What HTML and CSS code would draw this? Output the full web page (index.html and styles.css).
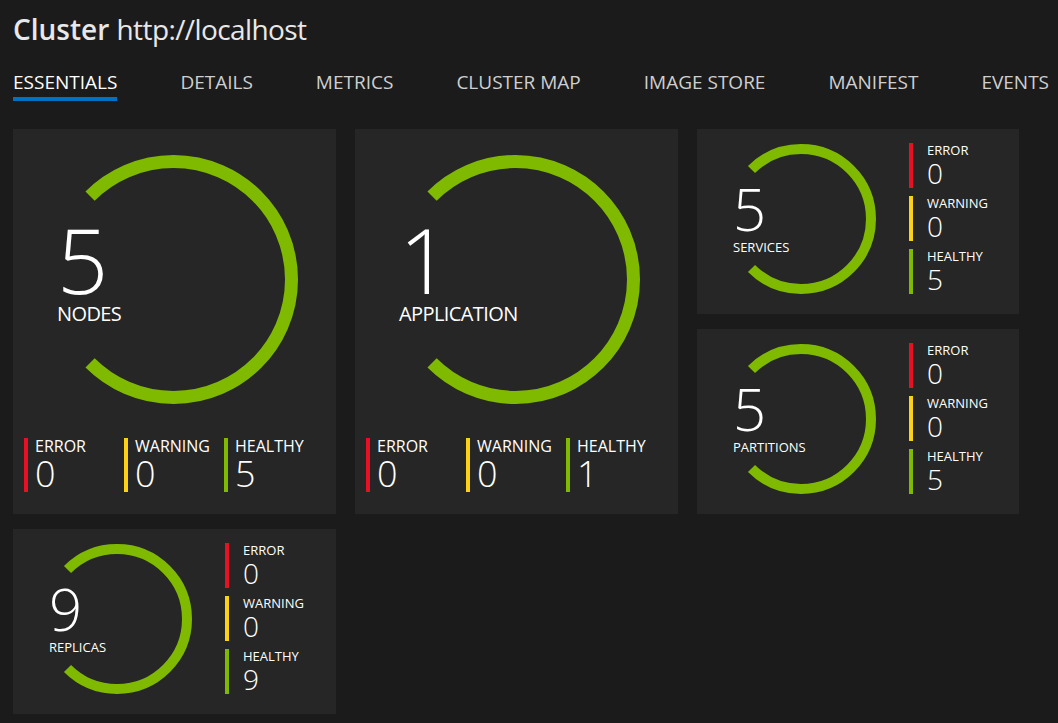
FILE: index.html
```html
<!DOCTYPE html>
<html lang="en">
<head>
<meta charset="utf-8">
<title>Cluster http://localhost</title>
<link rel="stylesheet" href="styles.css">
</head>
<body>
<header class="page-head">
  <h1 class="title"><b>Cluster</b> <span class="url">http://localhost</span></h1>
  <nav class="tabs">
    <span class="tab active">ESSENTIALS</span>
    <span class="tab">DETAILS</span>
    <span class="tab">METRICS</span>
    <span class="tab">CLUSTER MAP</span>
    <span class="tab">IMAGE STORE</span>
    <span class="tab">MANIFEST</span>
    <span class="tab">EVENTS</span>
  </nav>
</header>
<main class="grid">
  <section class="card card-big">
    <div class="gauge gauge-big">
      <svg class="ring" width="249" height="249" viewBox="0 0 249 249"><path d="M41.06 41.06 A118 118 0 1 1 41.06 207.94" fill="none" stroke="#7fba00" stroke-width="13"/></svg>
      <div class="gauge-text gauge-text-big"><div class="big-num">5</div><div class="big-label">NODES</div></div>
    </div>
    <div class="stats-row">
      <div class="stat stat-error"><div class="stat-label">ERROR</div><div class="stat-val">0</div></div>
      <div class="stat stat-warning"><div class="stat-label">WARNING</div><div class="stat-val">0</div></div>
      <div class="stat stat-healthy"><div class="stat-label">HEALTHY</div><div class="stat-val">5</div></div>
    </div>
  </section>
  <section class="card card-big">
    <div class="gauge gauge-big">
      <svg class="ring" width="249" height="249" viewBox="0 0 249 249"><path d="M41.06 41.06 A118 118 0 1 1 41.06 207.94" fill="none" stroke="#7fba00" stroke-width="13"/></svg>
      <div class="gauge-text gauge-text-big"><div class="big-num">1</div><div class="big-label">APPLICATION</div></div>
    </div>
    <div class="stats-row">
      <div class="stat stat-error"><div class="stat-label">ERROR</div><div class="stat-val">0</div></div>
      <div class="stat stat-warning"><div class="stat-label">WARNING</div><div class="stat-val">0</div></div>
      <div class="stat stat-healthy"><div class="stat-label">HEALTHY</div><div class="stat-val">1</div></div>
    </div>
  </section>
  <section class="card card-small">
    <div class="gauge gauge-small">
      <svg class="ring" width="150" height="150" viewBox="0 0 150 150"><path d="M25.5 25.5 A70 70 0 1 1 25.5 124.5" fill="none" stroke="#7fba00" stroke-width="10"/></svg>
      <div class="gauge-text gauge-text-small"><div class="mid-num">5</div><div class="mid-label">SERVICES</div></div>
    </div>
    <div class="stats-col">
      <div class="stat-s stat-error"><div class="s-label">ERROR</div><div class="s-val">0</div></div>
      <div class="stat-s stat-warning"><div class="s-label">WARNING</div><div class="s-val">0</div></div>
      <div class="stat-s stat-healthy"><div class="s-label">HEALTHY</div><div class="s-val">5</div></div>
    </div>
  </section>
  <section class="card card-small">
    <div class="gauge gauge-small">
      <svg class="ring" width="150" height="150" viewBox="0 0 150 150"><path d="M25.5 25.5 A70 70 0 1 1 25.5 124.5" fill="none" stroke="#7fba00" stroke-width="10"/></svg>
      <div class="gauge-text gauge-text-small"><div class="mid-num">5</div><div class="mid-label">PARTITIONS</div></div>
    </div>
    <div class="stats-col">
      <div class="stat-s stat-error"><div class="s-label">ERROR</div><div class="s-val">0</div></div>
      <div class="stat-s stat-warning"><div class="s-label">WARNING</div><div class="s-val">0</div></div>
      <div class="stat-s stat-healthy"><div class="s-label">HEALTHY</div><div class="s-val">5</div></div>
    </div>
  </section>
  <section class="card card-small">
    <div class="gauge gauge-small">
      <svg class="ring" width="150" height="150" viewBox="0 0 150 150"><path d="M25.5 25.5 A70 70 0 1 1 25.5 124.5" fill="none" stroke="#7fba00" stroke-width="10"/></svg>
      <div class="gauge-text gauge-text-small"><div class="mid-num">9</div><div class="mid-label">REPLICAS</div></div>
    </div>
    <div class="stats-col">
      <div class="stat-s stat-error"><div class="s-label">ERROR</div><div class="s-val">0</div></div>
      <div class="stat-s stat-warning"><div class="s-label">WARNING</div><div class="s-val">0</div></div>
      <div class="stat-s stat-healthy"><div class="s-label">HEALTHY</div><div class="s-val">9</div></div>
    </div>
  </section>
</main>
</body>
</html>
```
FILE: styles.css
```css
* { box-sizing: border-box; }

body {
  margin: 0;
  background: #1b1b1b;
  color: #ffffff;
  font-family: "Open Sans", "Noto Sans", "DejaVu Sans", sans-serif;
  overflow: hidden;
}

.page-head {
  padding: 15px 0 0 13px;
}

.title {
  margin: 0;
  font-size: 28px;
  line-height: 28px;
  font-weight: 400;
  color: #e8e8e8;
  white-space: nowrap;
}

.title b {
  font-weight: 600;
}

.title .url {
  letter-spacing: -0.6px;
}

.tabs {
  display: flex;
  gap: 63px;
  margin-top: 30px;
  white-space: nowrap;
}

.tab {
  font-size: 19px;
  line-height: 19px;
  padding-bottom: 5px;
  border-bottom: 4px solid transparent;
  color: #cfcfcf;
  flex: none;
}

.tab.active {
  color: #ffffff;
  border-bottom-color: #0072c6;
}

.grid {
  display: grid;
  grid-template-columns: 323px 323px 322px;
  grid-template-rows: 185px 185px 185px;
  column-gap: 19px;
  row-gap: 15px;
  margin-top: 28px;
  padding-left: 13px;
}

.card {
  background: #262626;
}

.card-big {
  grid-row: span 2;
  display: flex;
  flex-direction: column;
}

.card-small {
  display: flex;
}

.gauge {
  display: grid;
}

.gauge > * {
  grid-area: 1 / 1;
}

.gauge-big {
  width: 249px;
  margin: 26px 0 0 36px;
}

.gauge-text-big {
  padding-top: 59px;
  margin-left: 8px;
}

.big-num {
  font-size: 90px;
  line-height: 90px;
  font-weight: 350;
}

.big-label {
  font-size: 20px;
  line-height: 20px;
  letter-spacing: -0.6px;
}

.stats-row {
  display: flex;
  margin-top: 34px;
  padding-left: 11px;
}

.stat {
  width: 100px;
  height: 54px;
  border-left-width: 4px;
  border-left-style: solid;
  padding-left: 7px;
}

.stat-label {
  font-size: 16px;
  line-height: 17px;
}

.stat-val {
  font-size: 36px;
  line-height: 37px;
  font-weight: 350;
}

.gauge-small {
  width: 150px;
  height: 150px;
  margin: 15px 0 0 29px;
}

.gauge-text-small {
  padding-top: 36px;
  margin-left: 7px;
}

.mid-num {
  font-size: 58px;
  line-height: 58px;
  font-weight: 350;
}

.mid-label {
  font-size: 13px;
  line-height: 13px;
  margin-top: 3px;
}

.stats-col {
  display: flex;
  flex-direction: column;
  gap: 8px;
  margin-left: 33px;
  padding-top: 14px;
}

.stat-s {
  height: 45px;
  border-left-width: 4px;
  border-left-style: solid;
  padding-left: 14px;
}

.s-label {
  font-size: 13px;
  line-height: 15px;
}

.s-val {
  font-size: 28px;
  line-height: 30px;
  font-weight: 350;
}

.stat-error { border-left-color: #e81123; }
.stat-warning { border-left-color: #fcd116; }
.stat-healthy { border-left-color: #7fba00; }
```
